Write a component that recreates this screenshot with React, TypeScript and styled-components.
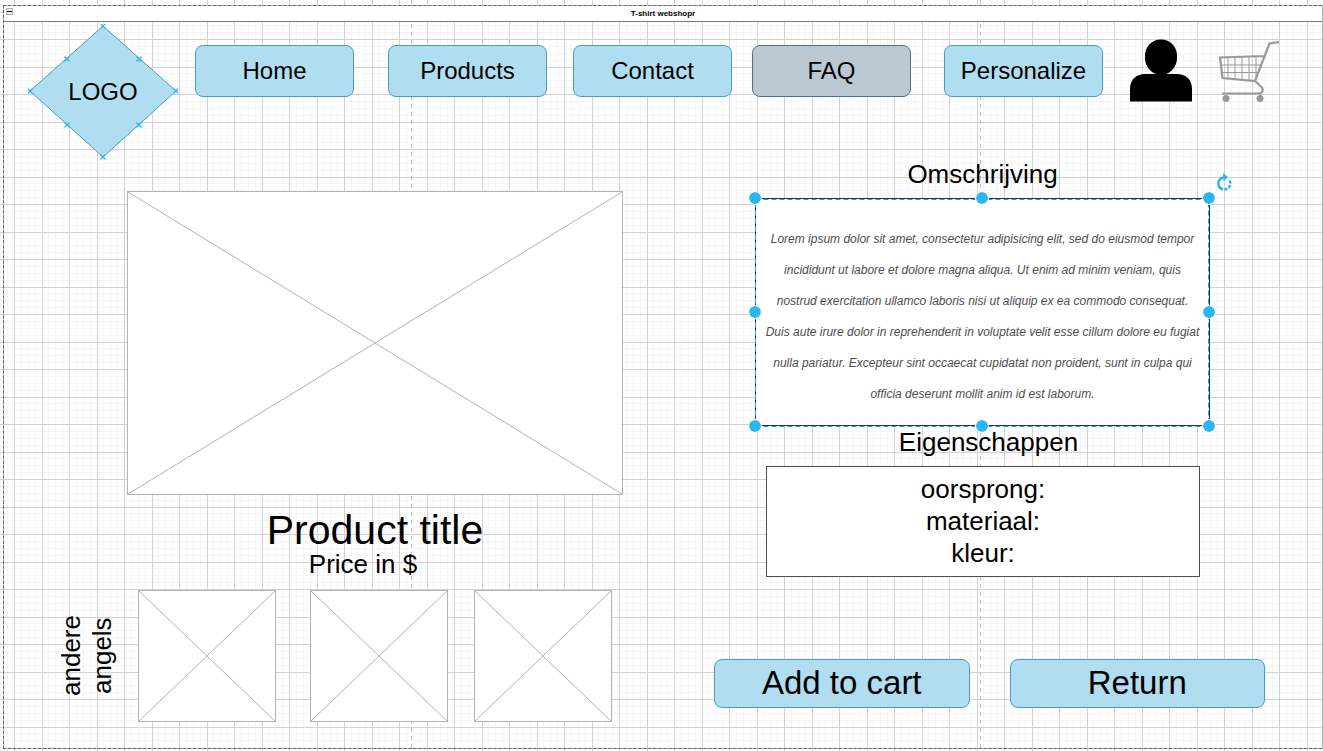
import React from 'react';
import styled, { createGlobalStyle, css } from 'styled-components';

const ACCENT = '#29b6f2';
const MINOR = '#f5f5f5';
const MAJOR = '#d2d2d2';

const gridStops = (color: string, positions: number[]) =>
  positions
    .map((p) => `transparent ${p}px, ${color} ${p}px, ${color} ${p + 1}px, transparent ${p + 1}px`)
    .join(', ');

const majors = [0, 28];
const minors = [7, 14, 21, 34, 41, 48];

const GlobalStyle = createGlobalStyle`
  *, *::before, *::after { box-sizing: border-box; }
  body {
    margin: 0;
    font-family: "Liberation Sans", Arial, Helvetica, sans-serif;
    color: #000;
  }
`;

const Canvas = styled.div`
  min-height: 100vh;
  padding: 5px 0 2px 3px;
  background-color: #fff;
  background-image:
    repeating-linear-gradient(to bottom, #bdbdbd 0 4px, transparent 4px 8px),
    repeating-linear-gradient(to bottom, #bdbdbd 0 4px, transparent 4px 8px),
    linear-gradient(to right, ${gridStops(MAJOR, majors)}),
    linear-gradient(to bottom, ${gridStops(MAJOR, majors)}),
    linear-gradient(to right, ${gridStops(MINOR, minors)}),
    linear-gradient(to bottom, ${gridStops(MINOR, minors)});
  background-size: 1px 100%, 1px 100%, 55px 55px, 55px 55px, 55px 55px, 55px 55px;
  background-position: 411px 0, 980px 0, 14px 12px, 14px 39px, 14px 12px, 14px 39px;
  background-repeat: no-repeat, no-repeat, repeat, repeat, repeat, repeat;
`;

const Frame = styled.div`
  position: relative;
  border: 1px solid #b4b4b4;
  &::after {
    content: '';
    position: absolute;
    inset: -1px 0 -1px -1px;
    border: 1px dashed #666;
    border-right: 0;
    pointer-events: none;
  }
`;

const TitleBar = styled.div`
  position: relative;
  height: 16px;
  border-bottom: 1px solid #777;
  background: #fff;
  text-align: center;
  font-size: 8px;
  line-height: 16px;
  font-weight: bold;
`;

const Collapse = styled.button`
  position: absolute;
  left: 2px;
  top: 2px;
  width: 7px;
  height: 7px;
  padding: 0;
  border: 1px solid #a8b0b8;
  background: #eee;
  display: flex;
  align-items: center;
  justify-content: center;
  &::before {
    content: '';
    width: 5px;
    height: 1px;
    background: #000;
  }
`;

const Header = styled.header`
  display: flex;
  align-items: flex-start;
  padding: 2px 43px 0 24px;
`;

const LogoLink = styled.a`
  display: grid;
  place-items: center;
  width: 150px;
  height: 136px;
  flex: none;
  color: #000;
  font-size: 24px;
  text-decoration: none;
  & > * { grid-area: 1 / 1; }
`;

const Nav = styled.nav`
  flex: 1;
  display: flex;
  padding: 21px 0 0 17px;
`;

const blueBox = css`
  border: 1px solid #4a9cbf;
  background: #b1ddf0;
  color: #000;
  font-family: inherit;
  padding: 0;
`;

const NavButton = styled.button<{ $after: number; $current?: boolean }>`
  ${blueBox}
  flex: 1;
  height: 52px;
  margin-right: ${(p) => p.$after}px;
  border-radius: 8px;
  font-size: 24px;
  ${(p) => p.$current && 'background: #bac8d3; border-color: #4f708c;'}
`;

const IconButton = styled.button`
  display: block;
  flex: none;
  margin: 15px 0 0 27px;
  padding: 0;
  border: 0;
  background: none;
  svg { display: block; }
`;

const Main = styled.main`
  display: grid;
  grid-template-columns: 567fr 551fr;
  column-gap: 91px;
  padding: 0 57px 26px 52px;
`;

const Product = styled.section`
  padding-top: 31px;
`;

const Hero = styled.div`
  margin-left: 71px;
  text-align: center;
`;

const Placeholder = styled.svg<{ $height: number }>`
  display: block;
  width: 100%;
  height: ${(p) => p.$height}px;
  border: 1px solid #b3b3b3;
  background: #fff;
`;

const ProductTitle = styled.h1`
  margin: 14px 0 0;
  font-size: 41px;
  line-height: 42px;
  font-weight: normal;
`;

const Price = styled.p`
  margin: 0 24px 13px 0;
  font-size: 26px;
  line-height: 26px;
`;

const Angles = styled.div`
  display: flex;
  padding-right: 11px;
`;

const AnglesLabel = styled.p`
  width: 62px;
  margin: 0 20px 0 0;
  flex: none;
  writing-mode: vertical-rl;
  transform: rotate(180deg);
  text-align: center;
  font-size: 26px;
  line-height: 31px;
`;

const Thumb = styled.div<{ $after: number }>`
  flex: 1;
  margin-right: ${(p) => p.$after}px;
`;

const Info = styled.section``;

const Heading = styled.h2<{ $indent?: number }>`
  margin: 0;
  padding-left: ${(p) => p.$indent ?? 0}px;
  text-align: center;
  font-size: 26px;
  line-height: 28px;
  font-weight: normal;
`;

const Details = styled.div`
  padding: 0 55px 0 41px;
`;

const Description = styled.div`
  position: relative;
  height: 228px;
  margin: 10px 0 2px;
  border: 1px solid #333;
  background: #fff;
  padding: 25px 0 0;
`;

const DescriptionText = styled.p`
  margin: 0;
  text-align: center;
  font-size: 12px;
  line-height: 31px;
  font-style: italic;
  color: #4d4d4d;
  span { display: block; white-space: nowrap; }
`;

const Selection = styled.div`
  position: absolute;
  inset: -1px 0 -1px -1px;
`;

const Outline = styled.svg`
  position: absolute;
  inset: 0;
  width: 100%;
  height: 100%;
  overflow: visible;
  rect {
    width: calc(100% - 1px);
    height: calc(100% - 1px);
  }
`;

const Handle = styled.i<{ $x: number; $y: number }>`
  position: absolute;
  left: ${(p) => p.$x}%;
  top: ${(p) => p.$y}%;
  width: 14px;
  height: 14px;
  margin: -7px;
  border: 1px solid #fff;
  border-radius: 50%;
  background: ${ACCENT};
  background-clip: padding-box;
`;

const Rotate = styled.svg`
  position: absolute;
  right: -23px;
  top: -25px;
`;

const Properties = styled.ul`
  list-style: none;
  margin: 10px 10px 0 11px;
  padding: 6px 0 7px;
  border: 1px solid #4d4d4d;
  background: #fff;
  text-align: center;
  font-size: 26px;
  line-height: 32px;
`;

const Actions = styled.div`
  display: flex;
  gap: 40px;
  margin-top: 82px;
`;

const ActionButton = styled.button`
  ${blueBox}
  flex: 1;
  height: 49px;
  padding-bottom: 2px;
  border-radius: 8px;
  font-size: 33px;
`;

const crossPoints = [
  [75, 2], [148, 67], [75, 133], [2, 67],
  [111, 35], [111, 101], [39, 101], [39, 35],
];

const handles = [
  [0, 0], [50, 0], [100, 0], [0, 50], [100, 50], [0, 100], [50, 100], [100, 100],
];

const navItems = [
  { label: 'Home', after: 34 },
  { label: 'Products', after: 26 },
  { label: 'Contact', after: 20 },
  { label: 'FAQ', after: 33, current: true },
  { label: 'Personalize', after: 0 },
];

const descriptionLines = [
  'Lorem ipsum dolor sit amet, consectetur adipisicing elit, sed do eiusmod tempor',
  'incididunt ut labore et dolore magna aliqua. Ut enim ad minim veniam, quis',
  'nostrud exercitation ullamco laboris nisi ut aliquip ex ea commodo consequat.',
  'Duis aute irure dolor in reprehenderit in voluptate velit esse cillum dolore eu fugiat',
  'nulla pariatur. Excepteur sint occaecat cupidatat non proident, sunt in culpa qui',
  'officia deserunt mollit anim id est laborum.',
];

const CrossedImage = ({ height }: { height: number }) => (
  <Placeholder $height={height} aria-hidden="true">
    <line x1="0" y1="0" x2="100%" y2="100%" stroke="#b3b3b3" />
    <line x1="100%" y1="0" x2="0" y2="100%" stroke="#b3b3b3" />
  </Placeholder>
);

const UserIcon = () => (
  <svg width="62" height="63" viewBox="0 0 62 63">
    <rect x="15" y="0.5" width="32" height="35" rx="15.5" ry="16.5" />
    <path d="M0 62.5V50C0 40 7 35 15 35H47C55 35 62 40 62 50V62.5Z" />
  </svg>
);

const CartIcon = () => (
  <svg width="60" height="63" viewBox="0 0 60 63" fill="none" stroke="#999">
    <path
      d="M60 3L50.500 4.500L36 42L3.500 39L1 18.500L45 17M36 42L43 48.500Q45 52 41.500 54.500H3"
      strokeWidth="2.2"
    />
    <path d="M9 18V39M16 18V40M23 18V41M30 18V41M37 17V39M2 26H42M2 33.500H39" />
    <circle cx="7" cy="59.500" r="3.500" fill="#999" stroke="none" />
    <circle cx="41" cy="59.500" r="3.500" fill="#999" stroke="none" />
  </svg>
);

export default function App() {
  return (
    <Canvas>
      <GlobalStyle />
      <Frame>
        <TitleBar>
          <Collapse aria-label="Collapse" />
          T-shirt webshopr
        </TitleBar>
        <Header>
          <LogoLink href="#">
            <svg width="150" height="136" viewBox="0 0 150 136" aria-hidden="true">
              <path d="M75 2L148 67L75 133L2 67Z" fill="#b1ddf0" stroke="#4a9cbf" />
              {crossPoints.map(([x, y]) => (
                <path
                  key={`${x}-${y}`}
                  d={`M${x - 2.5} ${y - 2.5}l5 5m0 -5l-5 5`}
                  stroke={ACCENT}
                  strokeWidth="1.3"
                />
              ))}
            </svg>
            <span>LOGO</span>
          </LogoLink>
          <Nav>
            {navItems.map((item) => (
              <NavButton key={item.label} $after={item.after} $current={item.current}>
                {item.label}
              </NavButton>
            ))}
          </Nav>
          <IconButton aria-label="Account"><UserIcon /></IconButton>
          <IconButton aria-label="Cart"><CartIcon /></IconButton>
        </Header>
        <Main>
          <Product>
            <Hero>
              <CrossedImage height={304} />
              <ProductTitle>Product title</ProductTitle>
              <Price>Price in $</Price>
            </Hero>
            <Angles>
              <AnglesLabel>andere<br />angels</AnglesLabel>
              <Thumb $after={34}><CrossedImage height={132} /></Thumb>
              <Thumb $after={26}><CrossedImage height={132} /></Thumb>
              <Thumb $after={0}><CrossedImage height={132} /></Thumb>
            </Angles>
          </Product>
          <Info>
            <Details>
              <Heading>Omschrijving</Heading>
              <Description>
                <DescriptionText>
                  {descriptionLines.map((line) => <span key={line}>{line}</span>)}
                </DescriptionText>
                <Selection>
                  <Outline aria-hidden="true">
                    <rect x="0.5" y="1.5" fill="none" stroke="#00a8ff" strokeDasharray="5 3" />
                  </Outline>
                  {handles.map(([x, y]) => <Handle key={`${x}-${y}`} $x={x} $y={y} />)}
                  <Rotate width="16" height="18" viewBox="0 0 16 18" fill="none" stroke={ACCENT}>
                    <path d="M8 4.500A6 6 0 1 0 12.500 6.200" strokeWidth="2.500" strokeDasharray="17 1.500 3 1.500 3 1.500 3 1.500" />
                    <path d="M7 0L12 4L7.500 8.500Z" fill={ACCENT} stroke="none" />
                  </Rotate>
                </Selection>
              </Description>
              <Heading $indent={12}>Eigenschappen</Heading>
              <Properties>
                <li>oorsprong:</li>
                <li>materiaal:</li>
                <li>kleur:</li>
              </Properties>
            </Details>
            <Actions>
              <ActionButton>Add to cart</ActionButton>
              <ActionButton>Return</ActionButton>
            </Actions>
          </Info>
        </Main>
      </Frame>
    </Canvas>
  );
}
